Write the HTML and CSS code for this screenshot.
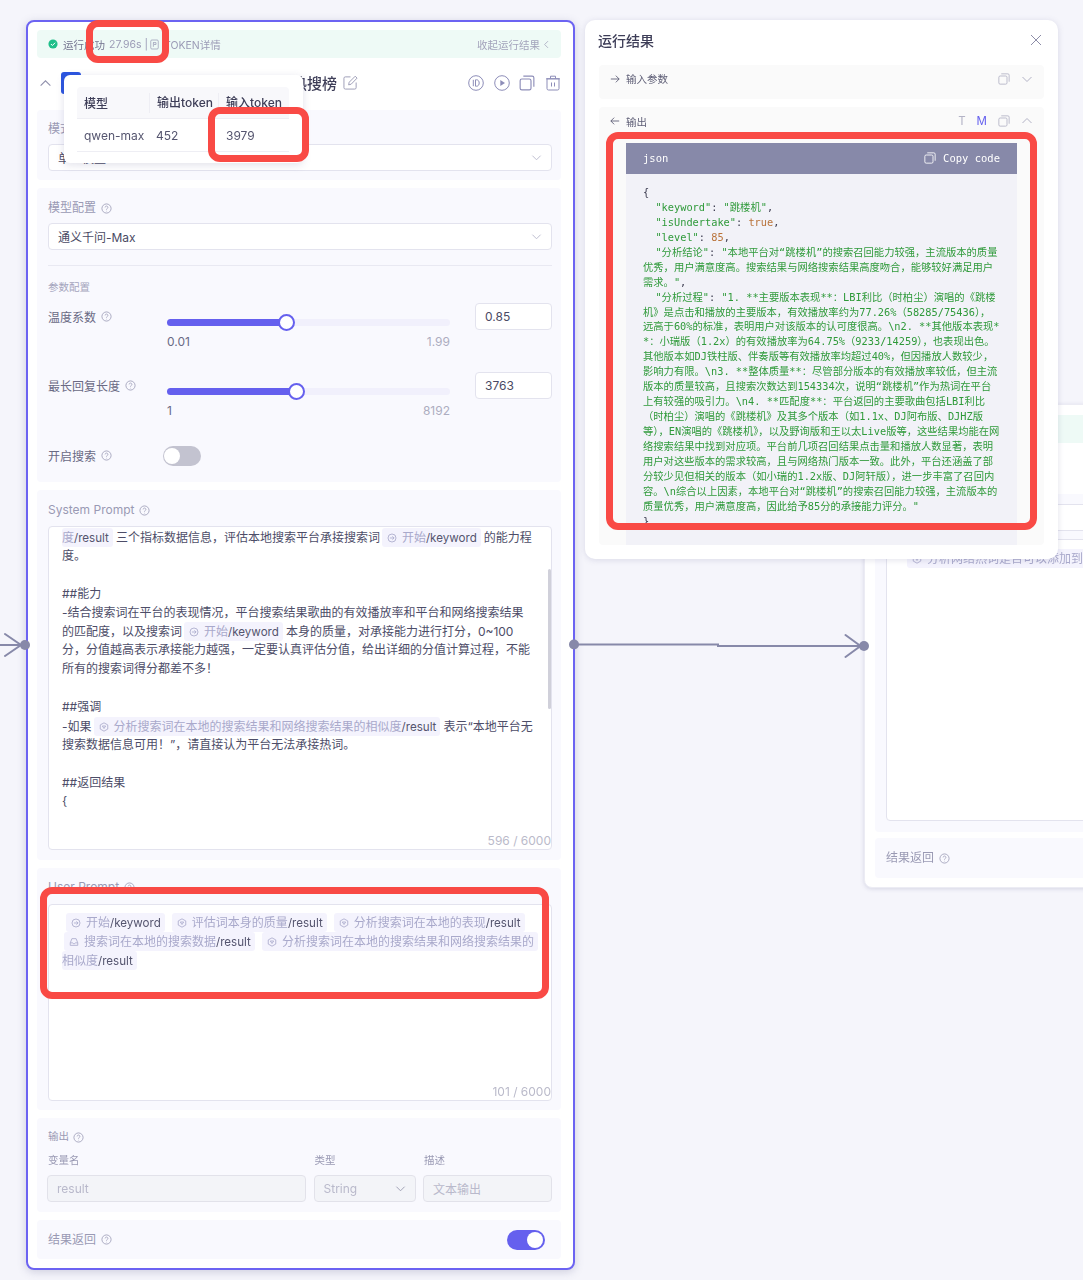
FILE: index.html
```html
<!DOCTYPE html>
<html lang="zh">
<head>
<meta charset="utf-8">
<title>运行结果</title>
<link rel="stylesheet" href="styles.css">
</head>
<body>
<svg class="defs" aria-hidden="true">
  <symbol id="i-help" viewBox="0 0 12 12"><circle cx="6" cy="6" r="5" fill="none" stroke="currentColor"/><path d="M4.5 4.8a1.5 1.5 0 1 1 2.3 1.3c-.5.3-.8.6-.8 1.1M6 8.6v.5" fill="none" stroke="currentColor"/></symbol>
  <symbol id="i-down" viewBox="0 0 12 12"><path d="M1.5 4l4.5 4.5L10.500 4" fill="none" stroke="currentColor"/></symbol>
  <symbol id="i-up" viewBox="0 0 12 12"><path d="M1.500 8L6 3.500 10.500 8" fill="none" stroke="currentColor"/></symbol>
  <symbol id="i-copy" viewBox="0 0 14 14"><rect x="1" y="3.500" width="9.500" height="9.500" rx="1.500" fill="none" stroke="currentColor"/><path d="M3.800 1h7.700A1.500 1.500 0 0 1 13 2.500v7.700" fill="none" stroke="currentColor"/></symbol>
  <symbol id="i-start" viewBox="0 0 12 12"><circle cx="6" cy="6" r="4.800" fill="none" stroke="currentColor"/><path d="M3.500 6h5M6.500 4l2 2-2 2" fill="none" stroke="currentColor"/></symbol>
  <symbol id="i-hex" viewBox="0 0 12 12"><path d="M6 1l4.500 2.500v5L6 11 1.500 8.500v-5z" fill="none" stroke="currentColor"/><path d="M4 4.800h4L6 7.800z" fill="none" stroke="currentColor"/></symbol>
  <symbol id="i-db" viewBox="0 0 12 12"><path d="M1.500 7L3.500 2h5l2 5v3h-9zM1.500 7h3l.7 1h1.600l.7-1h3" fill="none" stroke="currentColor"/></symbol>
</svg>

<main class="canvas">
  <section class="node node--back">
    <div class="status status--back"></div>
    <div class="back-gap"></div>
    <div class="panel panel--back">
      <div class="input input--back"></div>
      <div class="textarea textarea--back">
        <span class="chip"><svg class="ic"><use href="#i-hex"/></svg>分析网络热词是否可以添加到</span>
      </div>
    </div>
    <div class="panel panel--row panel--backrow">
      <span class="label">结果返回 <svg class="help"><use href="#i-help"/></svg></span>
    </div>
  </section>

  <section class="node node--main">
    <div class="status">
      <svg class="ok" viewBox="0 0 12 12"><circle cx="6" cy="6" r="5.500" fill="#1fbf8a"/><path d="M3.500 6l1.800 1.800 3.200-3.300" fill="none" stroke="#fff" stroke-width="1.200"/></svg>
      <span class="status-text">运行成功</span>
      <span class="status-muted">27.96s | </span>
      <svg class="doc" viewBox="0 0 12 14"><rect x="1" y="1" width="10" height="12" rx="1.500" fill="none" stroke="currentColor"/><path d="M4 4.500h4v2.500H5.200M4.500 4.500v5.500" fill="none" stroke="currentColor"/></svg>
      <span class="status-muted">TOKEN详情</span>
      <span class="status-right">收起运行结果 <svg class="tiny"><use href="#i-down"/></svg></span>
    </div>

    <header class="head">
      <svg class="head-toggle"><use href="#i-up"/></svg>
      <span class="logo"></span>
      <span class="title">评估本地平台能否承接热搜榜</span>
      <svg class="edit" viewBox="0 0 16 16"><path d="M8 2H2.500A1.500 1.500 0 0 0 1 3.500v10A1.500 1.500 0 0 0 2.500 15h10a1.500 1.500 0 0 0 1.500-1.500V8M6 10.500l.6-2.800L13 1.300l2 2-6.300 6.500z" fill="none" stroke="currentColor"/></svg>
      <span class="head-tools">
        <svg class="tool" viewBox="0 0 16 16"><circle cx="8" cy="8" r="7.300" fill="none" stroke="currentColor"/><path d="M5.300 4.800v6.400M7.500 4.800v6.400h1.200c3.300 0 3.300-6.400 0-6.400z" fill="none" stroke="currentColor"/></svg>
        <svg class="tool" viewBox="0 0 16 16"><circle cx="8" cy="8" r="7.300" fill="none" stroke="currentColor"/><path d="M6.300 5v6L11 8z" fill="currentColor"/></svg>
        <svg class="tool" viewBox="0 0 14 14"><use href="#i-copy"/></svg>
        <svg class="tool" viewBox="0 0 16 16"><path d="M2 3.800h12v9.700a1.500 1.500 0 0 1-1.500 1.500h-9A1.500 1.500 0 0 1 2 13.500zM1 3.800h14M5.500 3.500V1.200h5v2.300M6.500 7.500v4M9.500 7.500v4" fill="none" stroke="currentColor"/></svg>
      </span>
    </header>

    <div class="panel panel--mode">
      <div class="label">模式</div>
      <div class="input select"><span>单一模型</span><svg class="chev"><use href="#i-down"/></svg></div>
    </div>

    <div class="panel panel--config">
      <div class="label">模型配置 <svg class="help"><use href="#i-help"/></svg></div>
      <div class="input select"><span>通义千问-Max</span><svg class="chev"><use href="#i-down"/></svg></div>
      <div class="divider"></div>
      <div class="caption">参数配置</div>
      <div class="param">
        <div class="param-name">温度系数 <svg class="help"><use href="#i-help"/></svg></div>
        <div class="slider">
          <div class="track"><div class="fill" style="width:42.4%"><i class="thumb"></i></div></div>
          <div class="marks"><span>0.01</span><span class="mark-max">1.99</span></div>
        </div>
        <div class="input number">0.85</div>
      </div>
      <div class="param">
        <div class="param-name">最长回复长度 <svg class="help"><use href="#i-help"/></svg></div>
        <div class="slider">
          <div class="track"><div class="fill" style="width:45.9%"><i class="thumb"></i></div></div>
          <div class="marks"><span>1</span><span class="mark-max">8192</span></div>
        </div>
        <div class="input number">3763</div>
      </div>
      <div class="param param--switch">
        <div class="param-name">开启搜索 <svg class="help"><use href="#i-help"/></svg></div>
        <span class="switch"><i></i></span>
      </div>
    </div>

    <div class="panel panel--system">
      <div class="label label--en">System Prompt <svg class="help"><use href="#i-help"/></svg></div>
      <div class="textarea textarea--system">
        <div class="scrollbar"></div>
        <div class="prompt">
          <p><span class="chip chip--cut">度<b>/result</b></span>三个指标数据信息，评估本地搜索平台承接搜索词<span class="chip"><svg class="ic"><use href="#i-start"/></svg>开始<b>/keyword</b></span>的能力程</p>
          <p>度。</p>
          <p>&nbsp;</p>
          <p>##能力</p>
          <p>-结合搜索词在平台的表现情况，平台搜索结果歌曲的有效播放率和平台和网络搜索结果</p>
          <p>的匹配度，以及搜索词<span class="chip"><svg class="ic"><use href="#i-start"/></svg>开始<b>/keyword</b></span>本身的质量，对承接能力进行打分，0~100</p>
          <p>分，分值越高表示承接能力越强，一定要认真评估分值，给出详细的分值计算过程，不能</p>
          <p>所有的搜索词得分都差不多！</p>
          <p>&nbsp;</p>
          <p>##强调</p>
          <p>-如果<span class="chip"><svg class="ic"><use href="#i-hex"/></svg>分析搜索词在本地的搜索结果和网络搜索结果的相似度<b>/result</b></span>表示“本地平台无</p>
          <p>搜索数据信息可用！”，请直接认为平台无法承接热词。</p>
          <p>&nbsp;</p>
          <p>##返回结果</p>
          <p>{</p>
        </div>
        <span class="count">596 / 6000</span>
      </div>
    </div>

    <div class="panel panel--user">
      <div class="label label--en">User Prompt <svg class="help"><use href="#i-help"/></svg></div>
      <div class="textarea textarea--user">
        <div class="prompt prompt--user">
          <p class="chips chips--first">
            <span class="chip"><svg class="ic"><use href="#i-start"/></svg>开始<b>/keyword</b></span>
            <span class="chip"><svg class="ic"><use href="#i-hex"/></svg>评估词本身的质量<b>/result</b></span>
            <span class="chip"><svg class="ic"><use href="#i-hex"/></svg>分析搜索词在本地的表现<b>/result</b></span>
          </p>
          <p class="chips chips--second">
            <span class="chip"><svg class="ic"><use href="#i-db"/></svg>搜索词在本地的搜索数据<b>/result</b></span>
            <span class="chip"><svg class="ic"><use href="#i-hex"/></svg>分析搜索词在本地的搜索结果和网络搜索结果的</span>
          </p>
          <p class="chips">
            <span class="chip chip--cut">相似度<b>/result</b></span>
          </p>
        </div>
        <span class="count">101 / 6000</span>
      </div>
    </div>

    <div class="panel panel--output">
      <div class="label label--small">输出 <svg class="help"><use href="#i-help"/></svg></div>
      <div class="out-grid">
        <span class="label--small">变量名</span>
        <span class="label--small">类型</span>
        <span class="label--small">描述</span>
        <div class="input input--off">result</div>
        <div class="input input--off select"><span>String</span><svg class="chev chev--dark"><use href="#i-down"/></svg></div>
        <div class="input input--off">文本输出</div>
      </div>
    </div>

    <div class="panel panel--row">
      <span class="label">结果返回 <svg class="help"><use href="#i-help"/></svg></span>
      <span class="switch switch--on"><i></i></span>
    </div>
  </section>

  <section class="node node--result">
    <header class="result-head">
      <h2>运行结果</h2>
      <svg class="close" viewBox="0 0 12 12"><path d="M1 1l10 10M11 1L1 11" fill="none" stroke="currentColor"/></svg>
    </header>
    <div class="fold fold--closed">
      <div class="fold-head">
        <svg class="dir" viewBox="0 0 12 12"><path d="M1 6h10M7 2l4 4-4 4" fill="none" stroke="currentColor"/></svg>
        <span>输入参数</span>
        <span class="fold-tools">
          <svg class="fold-ic"><use href="#i-copy"/></svg>
          <svg class="fold-ic"><use href="#i-down"/></svg>
        </span>
      </div>
    </div>
    <div class="fold fold--open">
      <div class="fold-head">
        <svg class="dir" viewBox="0 0 12 12"><path d="M11 6H1M5 2L1 6l4 4" fill="none" stroke="currentColor"/></svg>
        <span>输出</span>
        <span class="fold-tools">
          <span class="mode">T</span>
          <span class="mode mode--on">M</span>
          <svg class="fold-ic"><use href="#i-copy"/></svg>
          <svg class="fold-ic"><use href="#i-up"/></svg>
        </span>
      </div>
      <div class="code">
        <div class="code-head">
          <span>json</span>
          <span class="code-copy"><svg class="code-ic"><use href="#i-copy"/></svg> Copy code</span>
        </div>
<pre class="code-body">{
  <s>"keyword"</s>: <s>"跳楼机"</s>,
  <s>"isUndertake"</s>: <u>true</u>,
  <s>"level"</s>: <u>85</u>,
  <s>"分析结论"</s>: <s>"本地平台对“跳楼机”的搜索召回能力较强，主流版本的质量
优秀，用户满意度高。搜索结果与网络搜索结果高度吻合，能够较好满足用户
需求。"</s>,
  <s>"分析过程"</s>: <s>"1. **主要版本表现**：LBI利比（时柏尘）演唱的《跳楼
机》是点击和播放的主要版本，有效播放率约为77.26%（58285/75436），
远高于60%的标准，表明用户对该版本的认可度很高。\n2. **其他版本表现*
*：小瑞版（1.2x）的有效播放率为64.75%（9233/14259），也表现出色。
其他版本如DJ铁柱版、伴奏版等有效播放率均超过40%，但因播放人数较少，
影响力有限。\n3. **整体质量**：尽管部分版本的有效播放率较低，但主流
版本的质量较高，且搜索次数达到154334次，说明“跳楼机”作为热词在平台
上有较强的吸引力。\n4. **匹配度**：平台返回的主要歌曲包括LBI利比
（时柏尘）演唱的《跳楼机》及其多个版本（如1.1x、DJ阿布版、DJHZ版
等），EN演唱的《跳楼机》，以及野询版和王以太Live版等，这些结果均能在网
络搜索结果中找到对应项。平台前几项召回结果点击量和播放人数显著，表明
用户对这些版本的需求较高，且与网络热门版本一致。此外，平台还涵盖了部
分较少见但相关的版本（如小瑞的1.2x版、DJ阿轩版），进一步丰富了召回内
容。\n综合以上因素，本地平台对“跳楼机”的搜索召回能力较强，主流版本的
质量优秀，用户满意度高，因此给予85分的承接能力评分。"</s>
}</pre>
      </div>
    </div>
  </section>

  <svg class="wires" viewBox="0 0 1083 1280">
    <path d="M0 645H20M5 634l16 11-16 11" fill="none" stroke="#8789a9" stroke-width="2" stroke-linecap="round"/>
    <circle cx="25" cy="645" r="5" fill="#8789a9"/>
    <path d="M574 644.500H718v1.500H860M845.500 635l15 11-15 11" fill="none" stroke="#8789a9" stroke-width="2" stroke-linecap="round"/>
    <circle cx="574" cy="644.500" r="5" fill="#8789a9"/>
    <circle cx="864" cy="646" r="5" fill="#8789a9"/>
  </svg>

  <div class="popover">
    <div class="pop-grid pop-grid--head">
      <span>模型</span><span class="pop-sep">输出token</span><span class="pop-sep">输入token</span>
    </div>
    <div class="pop-grid pop-grid--row">
      <span>qwen-max</span><span class="pop-cell">452</span><span class="pop-cell">3979</span>
    </div>
  </div>

  <div class="mark mark--time"></div>
  <div class="mark mark--token"></div>
  <div class="mark mark--code"></div>
  <div class="mark mark--prompt"></div>
</main>
</body>
</html>
```
FILE: styles.css
```css
* { box-sizing: border-box; }
html, body { margin: 0; padding: 0; }
body {
  background: #f5f5fb;
  font-family: Inter, "Noto Sans CJK SC", sans-serif;
  font-size: 12px;
  color: #4a4a64;
}
.defs { position: absolute; width: 0; height: 0; }
.canvas {
  position: relative;
  width: 1083px;
  height: 1280px;
  overflow: hidden;
  filter: blur(.45px);
}

/* canvas nodes */
.node {
  position: absolute;
  background: #fff;
  border-radius: 8px;
  display: flex;
  flex-direction: column;
}
.node--main {
  left: 26px;
  top: 20px;
  width: 549px;
  height: 1250px;
  border: 2px solid #6c63f2;
  padding: 8px 12px 8px 9px;
  gap: 8px;
  box-shadow: 0 2px 8px rgba(90, 90, 140, .25);
}
.node--result {
  left: 585px;
  top: 20px;
  width: 473px;
  height: 539px;
  padding: 0 14px;
  border-radius: 10px;
  box-shadow: 0 1px 6px rgba(90, 90, 140, .18);
  overflow: hidden;
}
.node--back {
  left: 864px;
  top: 404px;
  width: 420px;
  height: 484px;
  padding: 10px;
  border: 1px solid #ececf4;
  box-shadow: 0 1px 4px rgba(90, 90, 140, .2);
  gap: 6px;
}

/* status bar */
.status {
  height: 28px;
  flex: none;
  background: #eefaf6;
  border-radius: 4px;
  display: flex;
  align-items: center;
  padding: 0 10px 0 11px;
  font-size: 10.5px;
  color: #72728e;
}
.back-gap { height: 39px; flex: none; }
.ok { width: 10px; height: 10px; margin-right: 5px; }
.status-text { margin-right: 4px; }
.status-muted { color: #9b9bb6; }
.doc { width: 9px; height: 11px; color: #9b9bb6; margin: 0 5px 0 2px; }
.status-right {
  margin-left: auto;
  color: #a3a3bb;
  display: flex;
  align-items: center;
  gap: 2px;
}
.tiny { width: 9px; height: 9px; transform: rotate(90deg); }

/* node header */
.head {
  height: 36px;
  display: flex;
  align-items: center;
  flex: none;
  padding: 0 0 2px 2px;
}
.head-toggle { width: 13px; height: 13px; color: #9090ac; margin-right: 9px; }
.logo { width: 20px; height: 22px; border-radius: 3px; background: #2b55e0; margin-right: 61px; }
.title { font-size: 15px; font-weight: 500; color: #3e3e58; white-space: nowrap; margin-top: -1px; }
.edit { width: 15px; height: 15px; color: #9a9ab4; margin: -1px 0 0 6px; }
.head-tools { margin-left: auto; display: flex; gap: 9.7px; color: #8d8db8; }
.tool { width: 16px; height: 16px; }

/* panels */
.panel {
  background: #f9f9fe;
  border-radius: 4px;
  padding: 10px 9px 10px 11px;
  flex: none;
}
.panel--mode { height: 70px; }
.panel--config { height: 294px; padding-top: 11px; }
.panel--system { height: 370px; padding-top: 11px; }
.panel--user { height: 242px; }
.panel--output { height: 94px; padding-top: 11px; }
.panel--row {
  height: 39px;
  display: flex;
  align-items: center;
  justify-content: space-between;
  padding-right: 16px;
}
.panel--back { height: 338px; padding: 10px 11px; }
.panel--backrow { height: 40px; }
.label {
  color: #9a9ab4;
  line-height: 18px;
  display: flex;
  align-items: center;
  gap: 5px;
}
.label--small { font-size: 10.5px; color: #9a9ab4; line-height: 16px; display: flex; align-items: center; gap: 4px; }
.help { width: 11px; height: 11px; color: #a5a5bd; flex: none; }

/* inputs */
.input {
  height: 27px;
  background: #fff;
  border: 1px solid #e3e3ee;
  border-radius: 4px;
  padding: 0 9px;
  display: flex;
  align-items: center;
  color: #4a4a64;
  font-size: 12px;
}
.select { justify-content: space-between; }
.panel--mode .label, .panel--config > .label { margin-bottom: 6px; }
.chev { width: 11px; height: 11px; color: #b9b9cd; }
.chev--dark { color: #9a9ab0; }
.divider { height: 1px; background: #e9e9f2; margin-top: 15px; }
.caption { font-size: 10.5px; color: #a5a5bd; line-height: 18px; margin: 13px 0 6px; }
.input--back { margin-bottom: 8px; }
.input--off { background: #f3f4f8; color: #b9b9cb; border-color: #e2e2ea; }

/* parameter rows */
.param {
  display: grid;
  grid-template-columns: 119px 308px 77px;
  height: 69px;
}
.param-name { display: flex; align-items: center; gap: 5px; height: 27px; color: #6a6a84; }
.slider { padding: 16px 25px 0 0; }
.track { height: 7px; background: #f1f0fc; border-radius: 4px; }
.fill { position: relative; height: 7px; background: #6560ee; border-radius: 4px; }
.thumb {
  position: absolute;
  right: -8px;
  top: -5px;
  width: 17px;
  height: 17px;
  background: #fff;
  border: 2px solid #6560ee;
  border-radius: 50%;
}
.marks {
  display: flex;
  justify-content: space-between;
  margin-top: 7px;
  line-height: 18px;
  color: #6a6a84;
}
.mark-max { color: #adadc0; }
.param--switch { height: auto; margin-top: 1px; align-items: center; }
.switch {
  position: relative;
  display: block;
  width: 38px;
  height: 20px;
  margin-left: -4px;
  border-radius: 10px;
  background: #c3c3d0;
}
.switch i {
  position: absolute;
  left: 1px;
  top: 2px;
  width: 16px;
  height: 16px;
  border-radius: 50%;
  background: #fff;
}
.switch--on { background: #6560ee; margin: 0; }
.switch--on i { left: 20px; }

/* prompt boxes */
.textarea {
  position: relative;
  background: #fff;
  border: 1px solid #e3e3ee;
  border-radius: 4px;
  overflow: hidden;
  margin-top: 7px;
}
.textarea--system { height: 324px; }
.textarea--user { height: 197px; margin-top: 8px; }
.textarea--back { height: 282px; margin: 0; padding: 9px 18px; line-height: 20px; white-space: nowrap; }
.prompt {
  padding: 1px 14px 0 13px;
  line-height: 18.9px;
  color: #4d4d68;
}
.prompt p { margin: 0; height: 18.9px; white-space: nowrap; }
.prompt--user { padding-top: 8px; }
.chips { display: flex; gap: 7px; }
.chips--first { margin-left: 4px !important; }
.chips--second { margin-left: 2px !important; }
.chip {
  display: inline-block;
  background: #f4f3fd;
  border-radius: 3px;
  height: 19px;
  line-height: 19px;
  padding: 0 4px 0 5px;
  margin: 0 3px 0 2px;
  color: #a9a9cb;
}
.chips .chip { margin: 0; }
.chip b { font-weight: 400; font-size: 11.6px; color: #55556f; }
.chip--cut { padding-left: 0; }
.textarea--system .chip--cut { margin-left: 0; }
.ic { width: 10px; height: 10px; vertical-align: -1px; color: #a9a9cb; margin-right: 5px; }
.count {
  position: absolute;
  right: 0;
  bottom: 0;
  line-height: 16px;
  color: #babaca;
}
.scrollbar {
  position: absolute;
  right: 0;
  top: 42px;
  width: 3px;
  height: 140px;
  background: #d0d0da;
  border-radius: 2px;
}

/* output grid */
.out-grid {
  display: grid;
  grid-template-columns: 259px 102px 129px;
  column-gap: 7.500px;
  margin: 8px 0 0 -1px;
  row-gap: 6px;
}
.out-grid > .label--small { padding-left: 1px; }

/* result window */
.result-head {
  height: 45px;
  display: flex;
  align-items: center;
  justify-content: space-between;
  flex: none;
  padding: 0 0 6px 0;
  margin-left: -1px;
}
.result-head h2 { margin: 0; font-size: 14px; font-weight: 500; color: #3e3e58; }
.close { width: 12px; height: 12px; color: #8d8da8; margin-right: 2px; }
.fold {
  background: #fafafa;
  border-radius: 4px;
  flex: none;
  padding: 0 11px;
}
.fold--closed { height: 34px; margin-bottom: 8px; }
.fold--open { flex: 1; min-height: 0; padding: 0 11px 6px; margin-bottom: 14px; overflow: hidden; }
.fold-head {
  height: 28px;
  display: flex;
  align-items: center;
  font-size: 10.5px;
  color: #5e5e76;
}
.fold--closed .fold-head { height: 27px; }
.dir { width: 10px; height: 10px; margin-right: 6px; color: #55556f; }
.fold-tools { margin-left: auto; display: flex; align-items: center; gap: 11px; color: #b3b3c6; }
.fold-ic { width: 12px; height: 12px; }
.mode { font-size: 11.5px; color: #b3b3c6; }
.mode--on { color: #6560ee; }
.code { margin: 8px 16px 0; background: #f2f2f8; height: 100%; }
.code-head {
  height: 31px;
  background: #8789a9;
  color: #fff;
  display: flex;
  align-items: center;
  justify-content: space-between;
  padding: 0 17px 2px;
  font: 10.5px "DejaVu Sans Mono", "Noto Sans CJK SC", monospace;
}
.code-copy { display: flex; align-items: center; gap: 7px; }
.code-ic { width: 12px; height: 12px; }
.code-body {
  margin: 0;
  padding: 11px 17px 0;
  font: 10.3px/14.94px "DejaVu Sans Mono", "Noto Sans CJK SC", monospace;
  color: #3c3c50;
  white-space: pre;
  overflow: hidden;
}
.code-body s { text-decoration: none; color: #2f9a3a; }
.code-body u { text-decoration: none; color: #b9733a; }

/* overlays */
.wires { position: absolute; left: 0; top: 0; width: 1083px; height: 1280px; pointer-events: none; }
.popover {
  position: absolute;
  left: 64px;
  top: 75px;
  width: 239px;
  height: 88px;
  background: #fff;
  border-radius: 6px;
  box-shadow: 0 2px 8px rgba(90, 90, 140, .18);
  padding: 12px 14px 0 13px;
}
.pop-grid {
  display: grid;
  grid-template-columns: 72px 69px 71px;
  align-items: center;
}
.pop-grid--head {
  height: 32px;
  background: #f8f8fb;
  border-bottom: 1px solid #eeeef4;
  border-radius: 4px 4px 0 0;
  font-weight: 500;
  color: #3e3e58;
}
.pop-grid--head span { padding-left: 7px; }
.pop-sep { border-left: 1px solid #eeeef4; line-height: 20px; }
.pop-grid--row {
  height: 33px;
  border-bottom: 1px solid #eeeef4;
  color: #55556f;
}
.pop-grid--row span { padding-left: 7px; }
.pop-grid--row .pop-cell:last-child { padding-left: 8px; }
.mark {
  position: absolute;
  border: 7px solid #f94a45;
  border-radius: 12px;
  pointer-events: none;
}
.mark--time { left: 86px; top: 20px; width: 83px; height: 43px; }
.mark--token { left: 208px; top: 107px; width: 101px; height: 55px; }
.mark--code { left: 606px; top: 132px; width: 431px; height: 398px; }
.mark--prompt { left: 40px; top: 887px; width: 509px; height: 112px; }
```
